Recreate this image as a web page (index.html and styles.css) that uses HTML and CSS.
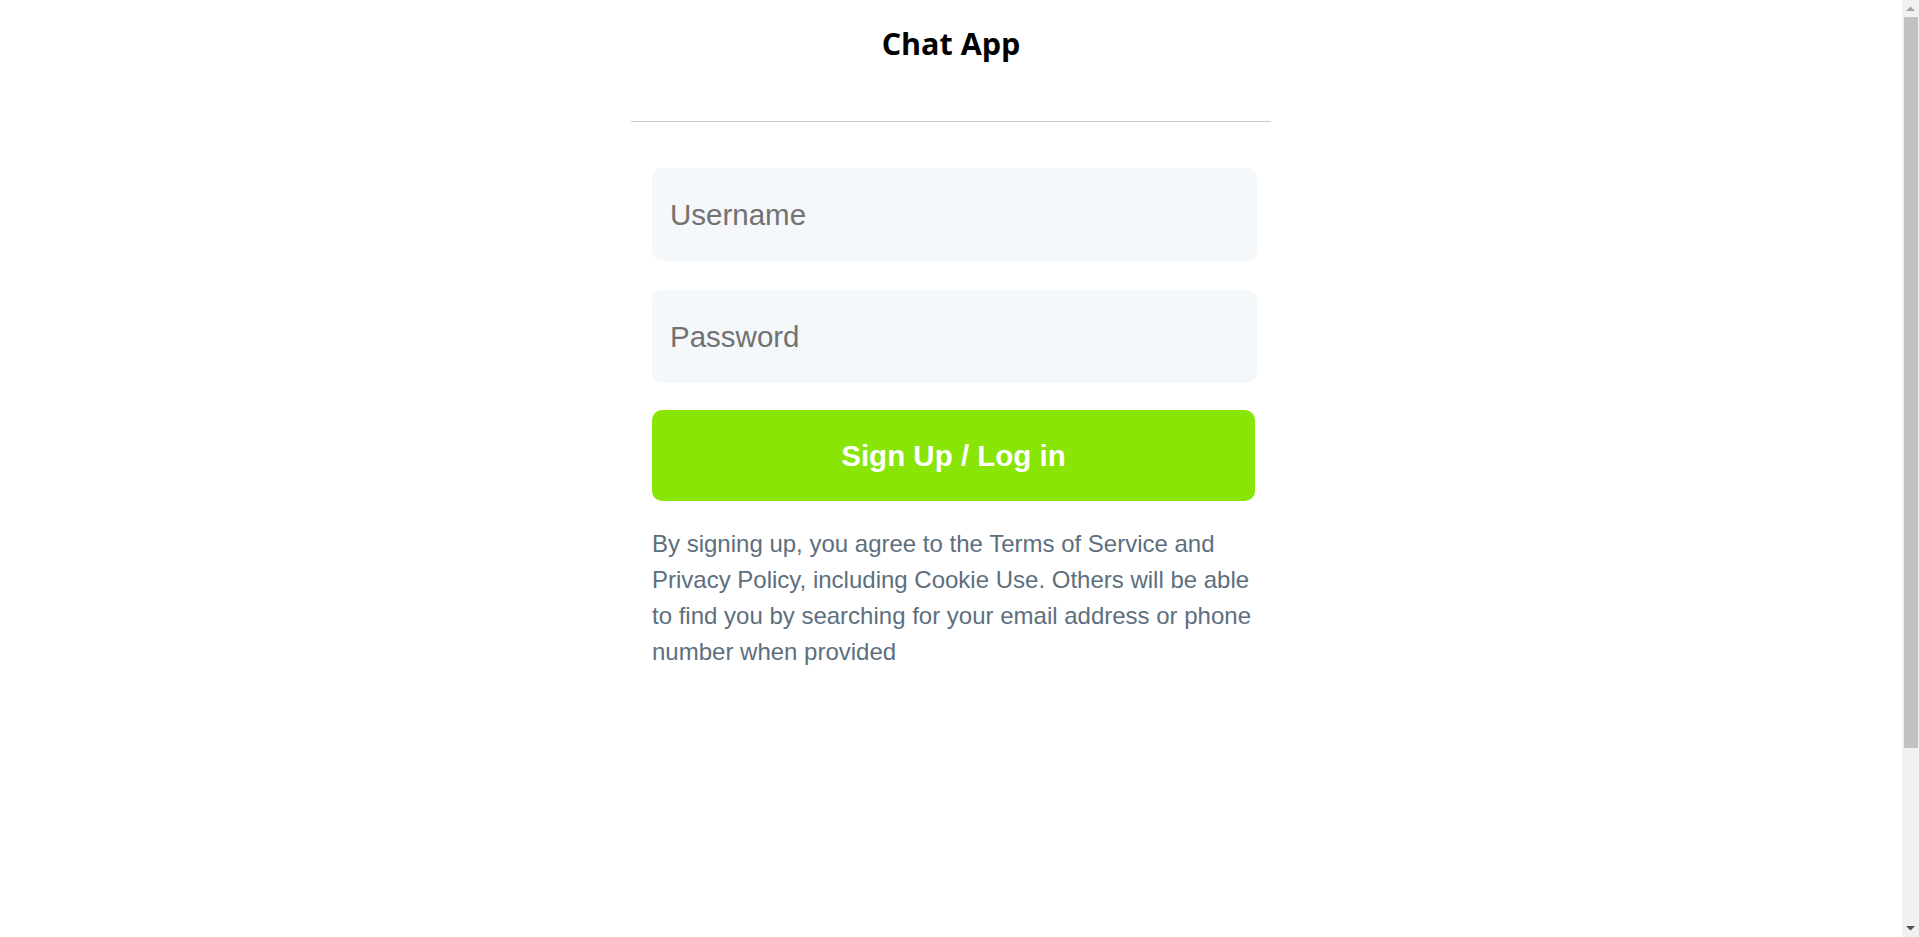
FILE: index.html
```html
<!DOCTYPE html>
<html lang="en">
<head>
<meta charset="utf-8">
<title>Chat App</title>
<link rel="stylesheet" href="styles.css">
</head>
<body>
<div class="shell">
  <main class="app">
    <div class="page">
      <header class="header">
        <h1 class="title">Chat App</h1>
      </header>
      <form class="form">
        <input class="field" type="text" placeholder="Username">
        <input class="field field-password" type="password" placeholder="Password">
        <button class="submit" type="button">Sign Up / Log in</button>
        <p class="terms">By signing up, you agree to the Terms of Service and Privacy Policy, including Cookie Use. Others will be able to find you by searching for your email address or phone number when provided</p>
      </form>
    </div>
  </main>
  <div class="scrollbar" aria-hidden="true">
    <div class="sb-btn">
      <svg width="9" height="5" viewBox="0 0 9 5"><path d="M0 5 L4.5 0.5 L9 5 Z" fill="#a3a3a3"/></svg>
    </div>
    <div class="sb-track"><div class="sb-thumb"></div></div>
    <div class="sb-btn">
      <svg width="9" height="5" viewBox="0 0 9 5"><path d="M0 0 L9 0 L4.5 4.5 Z" fill="#505050"/></svg>
    </div>
  </div>
</div>
</body>
</html>
```

FILE: styles.css
```css
html, body {
  margin: 0;
  padding: 0;
  background: #ffffff;
  overflow: hidden;
}

.shell {
  display: flex;
  height: 100vh;
}

.app {
  flex: 1;
  min-width: 0;
}

.scrollbar {
  width: 17px;
  flex: 0 0 17px;
  display: flex;
  flex-direction: column;
  background: #f1f1f1;
}

.sb-btn {
  height: 17px;
  flex: 0 0 17px;
  display: flex;
  align-items: center;
  justify-content: center;
}

.sb-track {
  flex: 1;
  display: flex;
  flex-direction: column;
}

.sb-thumb {
  height: 731px;
  margin: 0 1px 0 2px;
  background: #c1c1c1;
}

.page {
  width: 640px;
  margin: 0 auto;
}

.header {
  height: 121px;
  border-bottom: 1px solid #c3ced5;
}

.title {
  margin: 0;
  padding-top: 21px;
  text-align: center;
  font-family: "Open Sans", "Noto Sans", sans-serif;
  font-weight: 700;
  font-size: 30.5px;
  line-height: 44px;
  color: #000000;
}

.form {
  display: flex;
  flex-direction: column;
  align-items: flex-start;
  padding: 46px 0 0 21px;
  margin: 0;
}

.field {
  display: block;
  box-sizing: border-box;
  width: 605px;
  height: 93px;
  margin: 0;
  padding: 0 18px;
  border: none;
  outline: none;
  border-radius: 10px;
  background: #f5f8fa;
  font-family: "Liberation Sans", Arial, sans-serif;
  font-size: 29.5px;
  color: #14171a;
}

.field::placeholder {
  color: #727272;
  opacity: 1;
}

.field-password {
  margin-top: 29px;
}

.submit {
  display: block;
  box-sizing: border-box;
  width: 603px;
  height: 91px;
  margin: 27px 0 0 0;
  padding: 0;
  border: none;
  border-radius: 10px;
  background: #88e505;
  color: #ffffff;
  font-family: "Liberation Sans", Arial, sans-serif;
  font-weight: 700;
  font-size: 29.5px;
  cursor: pointer;
}

.terms {
  width: 605px;
  margin: 25px 0 0 0;
  font-family: "Liberation Sans", Arial, sans-serif;
  font-size: 24px;
  line-height: 36px;
  color: #5d6f7e;
}
```
